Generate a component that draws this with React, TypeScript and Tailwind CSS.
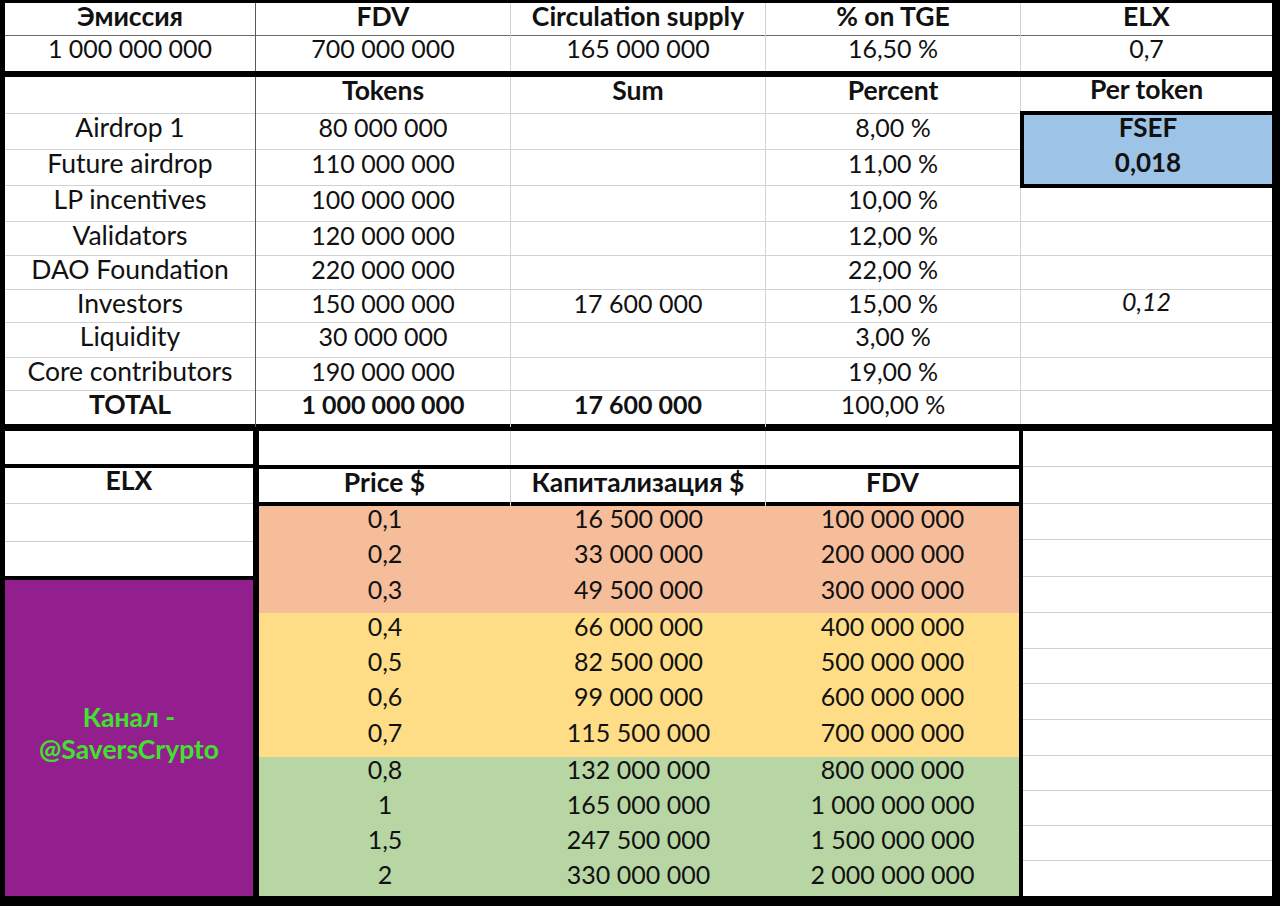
import React from "react";

const topHeaders = ["Эмиссия", "FDV", "Circulation supply", "% on TGE", "ELX"];
const topValues = ["1 000 000 000", "700 000 000", "165 000 000", "16,50 %", "0,7"];

type Row = { name: string; tokens: string; sum: string; pct: string; h: string; bold?: boolean };

const midRows: Row[] = [
  { name: "Airdrop 1", tokens: "80 000 000", sum: "", pct: "8,00 %", h: "h-[36px]" },
  { name: "Future airdrop", tokens: "110 000 000", sum: "", pct: "11,00 %", h: "h-[36px]" },
  { name: "LP incentives", tokens: "100 000 000", sum: "", pct: "10,00 %", h: "h-[36px]" },
  { name: "Validators", tokens: "120 000 000", sum: "", pct: "12,00 %", h: "h-[34px]" },
  { name: "DAO Foundation", tokens: "220 000 000", sum: "", pct: "22,00 %", h: "h-[34px]" },
  { name: "Investors", tokens: "150 000 000", sum: "17 600 000", pct: "15,00 %", h: "h-[33px]" },
  { name: "Liquidity", tokens: "30 000 000", sum: "", pct: "3,00 %", h: "h-[35px]" },
  { name: "Core contributors", tokens: "190 000 000", sum: "", pct: "19,00 %", h: "h-[33px]" },
  { name: "TOTAL", tokens: "1 000 000 000", sum: "17 600 000", pct: "100,00 %", h: "h-[33px]", bold: true },
];

const perTokenRows = [
  { h: "h-[34px]", v: "" },
  { h: "h-[34px]", v: "" },
  { h: "h-[34px]", v: "" },
  { h: "h-[33px]", v: "0,12" },
  { h: "h-[35px]", v: "" },
  { h: "h-[33px]", v: "" },
  { h: "h-[33px]", v: "" },
];

const priceRows = [
  { p: "0,1", cap: "16 500 000", fdv: "100 000 000", h: "h-[35px]", bg: "bg-[#f6bd9b]", pb: "pb-[10px]" },
  { p: "0,2", cap: "33 000 000", fdv: "200 000 000", h: "h-[36px]", bg: "bg-[#f6bd9b]", pb: "pb-[11px]" },
  { p: "0,3", cap: "49 500 000", fdv: "300 000 000", h: "h-[36px]", bg: "bg-[#f6bd9b]", pb: "pb-[11px]" },
  { p: "0,4", cap: "66 000 000", fdv: "400 000 000", h: "h-[35px]", bg: "bg-[#fedd86]", pb: "pb-[9px]" },
  { p: "0,5", cap: "82 500 000", fdv: "500 000 000", h: "h-[36px]", bg: "bg-[#fedd86]", pb: "pb-[10px]" },
  { p: "0,6", cap: "99 000 000", fdv: "600 000 000", h: "h-[36px]", bg: "bg-[#fedd86]", pb: "pb-[12px]" },
  { p: "0,7", cap: "115 500 000", fdv: "700 000 000", h: "h-[37px]", bg: "bg-[#fedd86]", pb: "pb-[12px]" },
  { p: "0,8", cap: "132 000 000", fdv: "800 000 000", h: "h-[35px]", bg: "bg-[#b7d6a4]", pb: "pb-[18px]" },
  { p: "1", cap: "165 000 000", fdv: "1 000 000 000", h: "h-[35px]", bg: "bg-[#b7d6a4]", pb: "pb-[18px]" },
  { p: "1,5", cap: "247 500 000", fdv: "1 500 000 000", h: "h-[35px]", bg: "bg-[#b7d6a4]", pb: "pb-[18px]" },
  { p: "2", cap: "330 000 000", fdv: "2 000 000 000", h: "h-[34px]", bg: "bg-[#b7d6a4]", pb: "pb-[18px]" },
];

const rightRows = [
  "h-[36px]", "h-[37px]", "h-[36px]", "h-[37px]", "h-[36px]", "h-[36px]", "h-[35px]",
  "h-[36px]", "h-[36px]", "h-[35px]", "h-[35px]", "h-[35px]", "h-[35px]",
];

function Cell({ children, className = "" }: { children?: React.ReactNode; className?: string }) {
  return (
    <div className={`flex items-center justify-center whitespace-nowrap leading-none ${className}`}>
      {children}
    </div>
  );
}

const topBorders = [
  "border-r border-[#5a5a5a]",
  "border-r border-[#d2d2d2]",
  "border-r border-[#d2d2d2]",
  "border-r border-[#d2d2d2]",
  "",
];

export default function App() {
  return (
    <div className="w-[1280px] bg-white border-t-[3px] border-l-[5px] border-r-[8px] border-b-[10px] border-black text-[25px] text-[#111] font-['Lato','Open_Sans',sans-serif]">
      {/* Section A */}
      <div className="flex flex-col border-b-[6px] border-black">
        <div className="grid grid-cols-[251px_255px_255px_255px_251px] h-[33px] border-b border-[#6a6a6a]">
          {topHeaders.map((t, i) => (
            <Cell key={t} className={`font-bold text-[26.5px] pb-[11px] ${topBorders[i]}`}>{t}</Cell>
          ))}
        </div>
        <div className="grid grid-cols-[251px_255px_255px_255px_251px] h-[35px]">
          {topValues.map((t, i) => (
            <Cell key={t} className={`pb-[10px] ${topBorders[i]}`}>{t}</Cell>
          ))}
        </div>
      </div>

      {/* Section B */}
      <div className="flex border-b-[7px] border-black">
        <div className="w-[1015px] flex flex-col">
          <div className="grid grid-cols-[251px_255px_255px_254px] h-[37px] border-b border-[#d2d2d2] text-[26.5px]">
            <Cell className="border-r border-[#5a5a5a]" />
            <Cell className="font-bold pb-[11px] border-r border-[#d2d2d2]">Tokens</Cell>
            <Cell className="font-bold pb-[11px] border-r border-[#d2d2d2]">Sum</Cell>
            <Cell className="font-bold pb-[11px]">Percent</Cell>
          </div>
          {midRows.map((r, i) => (
            <div
              key={r.name}
              className={`grid grid-cols-[251px_255px_255px_254px] ${r.h} ${i < midRows.length - 1 ? "border-b border-[#d2d2d2]" : ""}`}
            >
              <Cell className={`text-[26.5px] pb-[9px] border-r border-[#5a5a5a] ${r.bold ? "font-bold" : ""}`}>{r.name}</Cell>
              <Cell className={`pb-[9px] border-r border-[#d2d2d2] ${r.bold ? "font-bold" : ""}`}>{r.tokens}</Cell>
              <Cell className={`pb-[9px] border-r border-[#d2d2d2] ${r.bold ? "font-bold" : ""}`}>{r.sum}</Cell>
              <Cell className="pb-[9px]">{r.pct}</Cell>
            </div>
          ))}
        </div>
        <div className="flex-1 flex flex-col">
          <Cell className="h-[34px] font-bold text-[26.5px] pb-[10px] border-l border-[#d2d2d2]">Per token</Cell>
          <div className="h-[77px] flex flex-col bg-[#9dc3e6] border-l-4 border-t-4 border-b-4 border-black font-bold text-[26px]">
            <div className="h-[26px] flex items-center justify-center leading-none pb-[2px]">FSEF</div>
            <div className="flex-1 flex items-center justify-center leading-none pb-[1px]">0,018</div>
          </div>
          {perTokenRows.map((r, i) => (
            <Cell
              key={i}
              className={`${r.h} italic pb-[9px] border-l border-[#d2d2d2] ${i < perTokenRows.length - 1 ? "border-b" : ""}`}
            >
              {r.v}
            </Cell>
          ))}
        </div>
      </div>

      {/* Section C */}
      <div className="flex">
        <div className="w-[254px] flex flex-col border-r-[6px] border-black">
          <div className="h-[37px] border-b-4 border-black" />
          <Cell className="h-[36px] font-bold text-[26.5px] pb-[10px] border-b border-[#cfcfcf]">ELX</Cell>
          <div className="h-[38px] border-b border-[#cfcfcf]" />
          <div className="h-[38px] border-b-4 border-black" />
          <div className="flex-1 bg-[#931e8e] flex flex-col items-center justify-center pb-[10px] font-bold text-[26.5px] text-[#3fe22c] leading-[32px]">
            <div>Канал -</div>
            <div>@SaversCrypto</div>
          </div>
        </div>
        <div className="w-[764px] flex flex-col border-r-4 border-black">
          <div className="grid grid-cols-[252px_255px_253px] h-[38px] border-b-4 border-black">
            <div className="border-r border-[#d2d2d2]" />
            <div className="border-r border-[#d2d2d2]" />
            <div />
          </div>
          <div className="grid grid-cols-[252px_255px_253px] h-[37px] border-b-4 border-black text-[26.5px]">
            <Cell className="font-bold pb-[10px] border-r border-[#d2d2d2]">Price $</Cell>
            <Cell className="font-bold pb-[10px] border-r border-[#d2d2d2]">Капитализация $</Cell>
            <Cell className="font-bold pb-[10px]">FDV</Cell>
          </div>
          {priceRows.map((r) => (
            <div key={r.p} className={`grid grid-cols-[252px_255px_253px] ${r.h} ${r.bg}`}>
              <Cell className={r.pb}>{r.p}</Cell>
              <Cell className={r.pb}>{r.cap}</Cell>
              <Cell className={r.pb}>{r.fdv}</Cell>
            </div>
          ))}
        </div>
        <div className="flex-1 flex flex-col">
          {rightRows.map((h, i) => (
            <div key={i} className={`${h} ${i < rightRows.length - 1 ? "border-b border-[#cfcfcf]" : ""}`} />
          ))}
        </div>
      </div>
    </div>
  );
}
